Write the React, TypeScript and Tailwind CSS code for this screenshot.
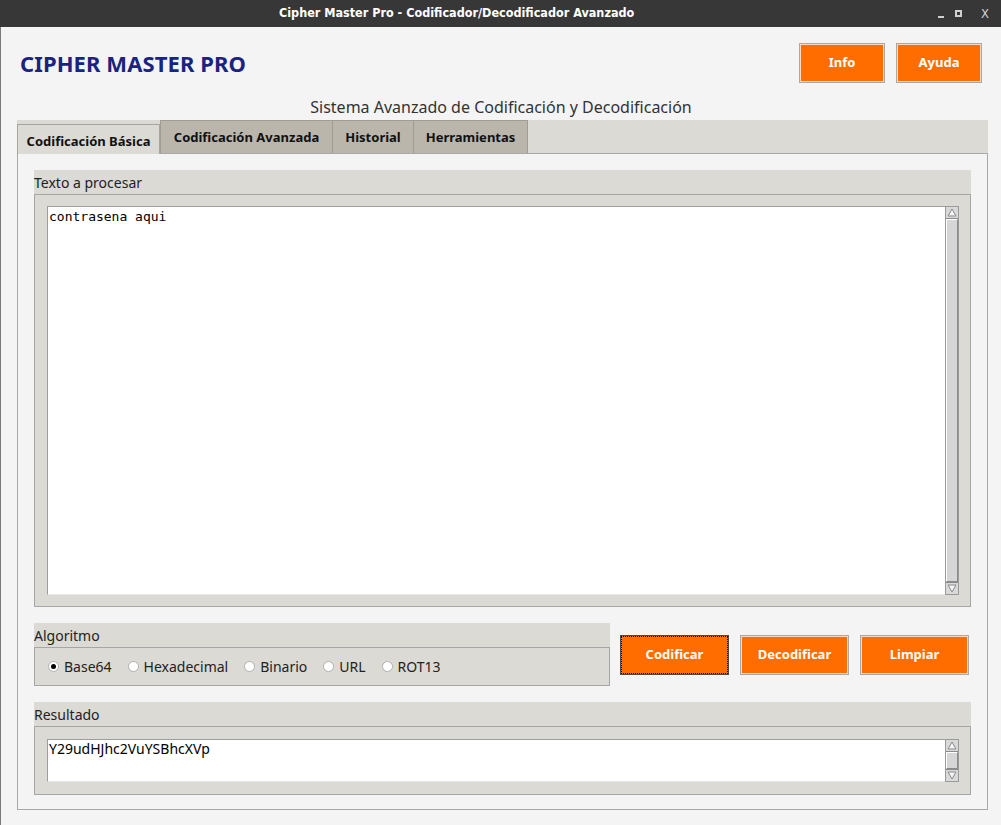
import React from "react";

const ScrollBar = () => (
  <div className="flex w-[14px] flex-col border border-[#9a9a9a] bg-[#d0d0d0]">
    <div className="flex h-[12px] items-center justify-center border-b border-[#8a8a8a] bg-[#d9d9d9]">
      <svg width="10" height="9" viewBox="0 0 10 9">
        <polygon points="5,1 9,8 1,8" fill="#f4f4f4" stroke="#8a8a8a" strokeWidth="1" />
      </svg>
    </div>
    <div className="flex-1 border border-t-white border-l-white border-r-[#8a8a8a] border-b-[#8a8a8a] bg-[#d6d6d6]" />
    <div className="flex h-[12px] items-center justify-center border-t border-[#8a8a8a] bg-[#d9d9d9]">
      <svg width="10" height="9" viewBox="0 0 10 9">
        <polygon points="1,1 9,1 5,8" fill="#f4f4f4" stroke="#8a8a8a" strokeWidth="1" />
      </svg>
    </div>
  </div>
);

const Radio = ({ label, checked }: { label: string; checked?: boolean }) => (
  <div className="flex items-center gap-[5px]">
    <span className="flex h-[11px] w-[11px] items-center justify-center rounded-full border border-[#b0b0b0] bg-white">
      {checked && <span className="h-[5px] w-[5px] rounded-full bg-black" />}
    </span>
    <span>{label}</span>
  </div>
);

const OrangeButton = ({ label, focused, w }: { label: string; focused?: boolean; w: string }) => (
  <button
    className={
      "flex h-[40px] items-center justify-center bg-[#ff6d00] text-[13px] font-bold text-white " +
      w +
      (focused
        ? " border border-[#4a4a4a]"
        : " border border-[#a8a8a8] shadow-[inset_0_0_0_1px_#ffd9bf]")
    }
  >
    {focused ? (
      <span className="flex h-full w-full items-center justify-center border border-dotted border-black">{label}</span>
    ) : (
      label
    )}
  </button>
);

export default function App() {
  return (
    <div className="flex h-[825px] w-[1001px] flex-col overflow-hidden bg-[#f4f4f4] font-['Noto_Sans',sans-serif] text-[#222]">
      {/* barra de titulo */}
      <div className="relative flex h-[27px] items-center bg-[#373737] font-['DejaVu_Sans_Condensed','DejaVu_Sans',sans-serif] text-[12.5px] font-bold text-white">
        <span className="ml-[279px] [font-stretch:condensed]">Cipher Master Pro - Codificador/Decodificador Avanzado</span>
        <div className="absolute right-[12px] top-0 flex h-full items-center text-[#d0d0d0]">
          <span className="mt-[6px] h-[2px] w-[6px] bg-[#d0d0d0]" />
          <span className="ml-[11px] h-[7px] w-[7px] border-2 border-[#d0d0d0]" />
          <span className="ml-[19px] text-[13px] font-normal">X</span>
        </div>
      </div>

      <div className="flex flex-1 flex-col border-l border-[#7a7a7a]">
        {/* cabecera */}
        <div className="flex items-center justify-between pl-[19px] pr-[19px] pt-[16px]">
          <h1 className="text-[22px] font-bold tracking-[0.1px] text-[#1a237e]">CIPHER MASTER PRO</h1>
          <div className="flex gap-[11px]">
            <OrangeButton label="Info" w="w-[86px]" />
            <OrangeButton label="Ayuda" w="w-[86px]" />
          </div>
        </div>

        <p className="mb-[2px] mt-[13px] text-center text-[16px] leading-[22px] text-[#333]">
          Sistema Avanzado de Codificación y Decodificación
        </p>

        {/* notebook */}
        <div className="ml-[16px] flex w-[971px] flex-col">
          <div className="relative z-10 flex h-[33px] items-start bg-[#dcdad5] text-[13px] font-bold text-[#111]">
            <div className="mt-[4px] flex h-[30px] w-[143px] items-center justify-center border border-b-0 border-[#a8a59d] bg-[#dcdad5] pt-[4px]">
              Codificación Básica
            </div>
            <div className="flex h-[33px] w-[173px] items-center justify-center border border-b-0 border-[#a09c93] bg-[#bab6ac] pt-[2px]">
              Codificación Avanzada
            </div>
            <div className="flex h-[33px] w-[81px] items-center justify-center border border-b-0 border-l-0 border-[#a09c93] bg-[#bab6ac] pt-[2px]">
              Historial
            </div>
            <div className="flex h-[33px] w-[114px] items-center justify-center border border-b-0 border-l-0 border-[#a09c93] bg-[#bab6ac] pt-[2px]">
              Herramientas
            </div>
          </div>

          <div className="flex h-[657px] flex-col border border-[#a8a8a8] bg-[#f4f4f4] px-[16px] pt-[16px]">
            {/* texto a procesar */}
            <div className="flex h-[24px] items-center bg-[#dcdad5] text-[14px] text-[#222]">Texto a procesar</div>
            <div className="flex h-[413px] border border-[#a6a6a6] bg-[#dcdad5] pb-[11px] pl-[12px] pr-[11px] pt-[11px]">
              <div className="flex-1 border border-[#9d9d9d] border-b-[#e8e8e8] border-r-0 bg-white px-[1px] pt-[1px] font-['DejaVu_Sans_Mono',monospace] text-[13px] leading-[17px] text-black">
                contrasena aqui
              </div>
              <ScrollBar />
            </div>

            {/* algoritmo + botones */}
            <div className="mt-[16px] flex items-center">
              <div className="flex w-[576px] flex-col">
                <div className="flex h-[24px] items-center bg-[#dcdad5] text-[14px]">Algoritmo</div>
                <div className="flex h-[39px] items-center gap-[16px] border border-[#a6a6a6] bg-[#dcdad5] pl-[13px] text-[14px]">
                  <Radio label="Base64" checked />
                  <Radio label="Hexadecimal" />
                  <Radio label="Binario" />
                  <Radio label="URL" />
                  <Radio label="ROT13" />
                </div>
              </div>
              <div className="ml-[10px] mt-[1px] flex gap-[11px]">
                <OrangeButton label="Codificar" focused w="w-[109px]" />
                <OrangeButton label="Decodificar" w="w-[109px]" />
                <OrangeButton label="Limpiar" w="w-[109px]" />
              </div>
            </div>

            {/* resultado */}
            <div className="mt-[16px] flex h-[24px] items-center bg-[#dcdad5] text-[14px]">Resultado</div>
            <div className="flex h-[69px] border border-[#a6a6a6] bg-[#dcdad5] pb-[12px] pl-[12px] pr-[11px] pt-[12px]">
              <div className="flex-1 border border-[#9d9d9d] border-b-[#e8e8e8] border-r-0 bg-white px-[1px] text-[14px] leading-[18px] text-black">
                Y29udHJhc2VuYSBhcXVp
              </div>
              <ScrollBar />
            </div>
          </div>
        </div>
      </div>
    </div>
  );
}
